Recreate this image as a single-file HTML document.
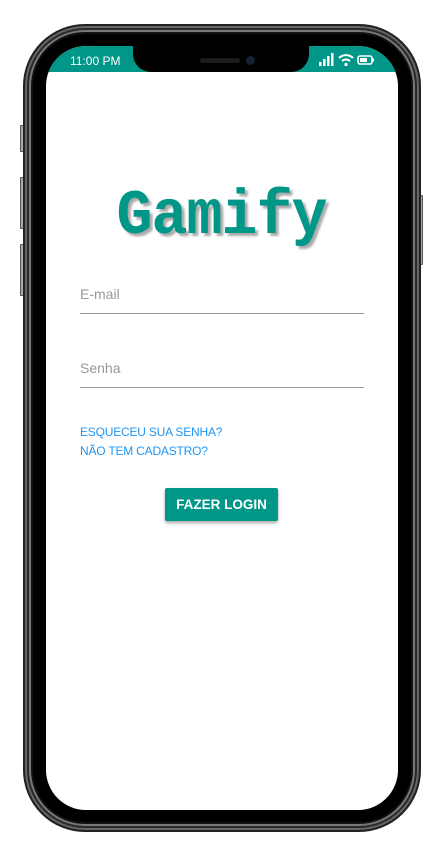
<!DOCTYPE html>
<html><head><meta charset="utf-8"><style>
*{margin:0;padding:0;box-sizing:border-box}
body{width:443px;height:856px;background:#fff;position:relative;overflow:hidden;font-family:"Liberation Sans",Roboto,sans-serif}
.btn{position:absolute;background:#aaa;border:1px solid #555;border-radius:1px}
.frame{position:absolute;left:23px;top:24px;width:398px;height:808px;border-radius:62px;background:#000;border:2px solid #222;box-shadow:inset 0 0 0 2px #666,inset 0 0 0 4px #2a2a2a,inset 0 0 0 6px #777,inset 0 0 0 8px #111}
.screen{position:absolute;left:46px;top:46px;width:352px;height:764px;border-radius:40px;background:#fff;overflow:hidden}
.status{position:absolute;left:0;top:0;width:352px;height:26px;background:#009688}
.notch{position:absolute;left:87px;top:-2px;width:176px;height:28px;background:#000;border-radius:0 0 18px 18px}
.time{position:absolute;left:24px;top:8px;color:#fff;font-size:12px}
.logo{position:absolute;left:0;width:443px;top:183px;text-align:center;font-family:"Liberation Mono",monospace;font-weight:bold;font-size:60px;color:#009688;text-shadow:3px 3px 2px #aaa;letter-spacing:-1px;transform:scaleY(1.05)}
.label{position:absolute;left:80px;color:#999;font-size:14px}
.line{position:absolute;left:80px;width:284px;height:1px;background:#999}
.link{position:absolute;left:80px;color:#2196f3;font-size:12px;letter-spacing:-0.2px}
.login{position:absolute;left:165px;top:488px;width:113px;height:33px;background:#009688;color:#fff;font-size:13.5px;font-weight:bold;text-align:center;line-height:33px;border-radius:2px;box-shadow:0 2px 3px rgba(0,0,0,.35)}
</style></head><body>
<div class="btn" style="left:20px;top:125px;width:4px;height:27px"></div>
<div class="btn" style="left:20px;top:177px;width:4px;height:52px"></div>
<div class="btn" style="left:20px;top:244px;width:4px;height:52px"></div>
<div class="btn" style="left:419px;top:195px;width:4px;height:70px"></div>
<div class="frame"></div>
<div class="screen">
 <div class="status"><div class="time">11:00 PM</div>
  <svg style="position:absolute;left:273px;top:7px" width="60" height="14" viewBox="0 0 60 14">
   <rect x="0" y="9" width="2.5" height="4" fill="#fff"/><rect x="4" y="6" width="2.5" height="7" fill="#fff"/><rect x="8" y="3" width="2.5" height="10" fill="#fff"/><rect x="12" y="0" width="2.5" height="13" fill="#fff"/>
   <path d="M20 5 A10 10 0 0 1 34 5" stroke="#fff" stroke-width="2" fill="none"/><path d="M23 8 A6 6 0 0 1 31 8" stroke="#fff" stroke-width="2" fill="none"/><circle cx="27" cy="11.5" r="1.6" fill="#fff"/>
   <rect x="39" y="3" width="14" height="8" rx="2" stroke="#fff" stroke-width="1.6" fill="none"/><rect x="41" y="5" width="7" height="4" fill="#fff"/><rect x="53.5" y="5.5" width="1.5" height="3" fill="#fff"/>
  </svg>
 </div>
 <div class="notch"><div style="position:absolute;left:113px;top:12px;width:9px;height:9px;border-radius:50%;background:#123"></div><div style="position:absolute;left:67px;top:14px;width:40px;height:5px;border-radius:3px;background:#1c1c1c"></div></div>
</div>
<div class="logo">Gamify</div>
<div class="label" style="top:286px">E-mail</div>
<div class="line" style="top:313px"></div>
<div class="label" style="top:360px">Senha</div>
<div class="line" style="top:387px"></div>
<div class="link" style="top:425px">ESQUECEU SUA SENHA?</div>
<div class="link" style="top:444px">NÃO TEM CADASTRO?</div>
<div class="login">FAZER LOGIN</div>
</body></html>
